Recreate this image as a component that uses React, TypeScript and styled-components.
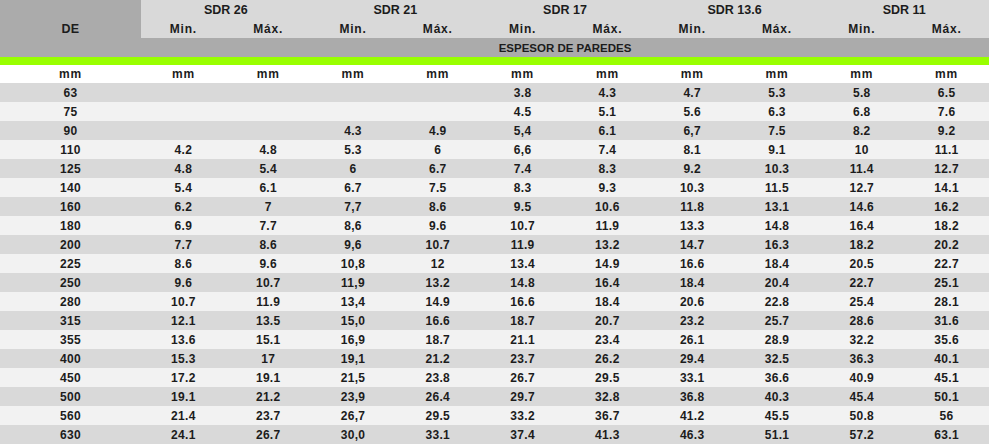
import React from "react";
import styled, { createGlobalStyle } from "styled-components";

const GlobalStyle = createGlobalStyle`
  body {
    margin: 0;
    background: #ffffff;
    font-family: "Liberation Sans", Arial, sans-serif;
  }
`;

const Table = styled.table`
  width: 989px;
  border-collapse: collapse;
  table-layout: fixed;
  font-size: 12px;
  font-weight: bold;
  color: #1c1c1c;
  letter-spacing: 0.3px;
`;

const DeHead = styled.th`
  background: #ababab;
  text-align: center;
  vertical-align: middle;
  padding: 0;
  font-size: 12.5px;
`;

const GroupHead = styled.th`
  background: #d9d9d9;
  height: 19px;
  padding: 0;
  text-align: center;
  font-size: 12.5px;
  letter-spacing: 0;
`;

const SubHead = styled.th`
  background: #d9d9d9;
  height: 19px;
  padding: 0;
  text-align: center;
  letter-spacing: 0.8px;
`;

const BandHead = styled.th`
  background: #ababab;
  height: 19px;
  padding: 0;
  text-align: center;
  font-size: 11.5px;
  letter-spacing: 0;
`;

const GreenRow = styled.tr`
  height: 8px;
  background: #99ff00;
`;

const UnitCell = styled.td`
  height: 18px;
  padding: 0;
  text-align: center;
  background: #ffffff;
  letter-spacing: 0.8px;
`;

const Row = styled.tr<{ $dark: boolean }>`
  background: ${({ $dark }) => ($dark ? "#d9d9d9" : "#f2f2f2")};
`;

const Cell = styled.td`
  height: 19px;
  padding: 0;
  text-align: center;
  vertical-align: middle;
`;

const groups = ["SDR 26", "SDR 21", "SDR 17", "SDR 13.6", "SDR 11"];

const rows: string[][] = [
  ["63", "", "", "", "", "3.8", "4.3", "4.7", "5.3", "5.8", "6.5"],
  ["75", "", "", "", "", "4.5", "5.1", "5.6", "6.3", "6.8", "7.6"],
  ["90", "", "", "4.3", "4.9", "5,4", "6.1", "6,7", "7.5", "8.2", "9.2"],
  ["110", "4.2", "4.8", "5.3", "6", "6,6", "7.4", "8.1", "9.1", "10", "11.1"],
  ["125", "4.8", "5.4", "6", "6.7", "7.4", "8.3", "9.2", "10.3", "11.4", "12.7"],
  ["140", "5.4", "6.1", "6.7", "7.5", "8.3", "9.3", "10.3", "11.5", "12.7", "14.1"],
  ["160", "6.2", "7", "7,7", "8.6", "9.5", "10.6", "11.8", "13.1", "14.6", "16.2"],
  ["180", "6.9", "7.7", "8,6", "9.6", "10.7", "11.9", "13.3", "14.8", "16.4", "18.2"],
  ["200", "7.7", "8.6", "9,6", "10.7", "11.9", "13.2", "14.7", "16.3", "18.2", "20.2"],
  ["225", "8.6", "9.6", "10,8", "12", "13.4", "14.9", "16.6", "18.4", "20.5", "22.7"],
  ["250", "9.6", "10.7", "11,9", "13.2", "14.8", "16.4", "18.4", "20.4", "22.7", "25.1"],
  ["280", "10.7", "11.9", "13,4", "14.9", "16.6", "18.4", "20.6", "22.8", "25.4", "28.1"],
  ["315", "12.1", "13.5", "15,0", "16.6", "18.7", "20.7", "23.2", "25.7", "28.6", "31.6"],
  ["355", "13.6", "15.1", "16,9", "18.7", "21.1", "23.4", "26.1", "28.9", "32.2", "35.6"],
  ["400", "15.3", "17", "19,1", "21.2", "23.7", "26.2", "29.4", "32.5", "36.3", "40.1"],
  ["450", "17.2", "19.1", "21,5", "23.8", "26.7", "29.5", "33.1", "36.6", "40.9", "45.1"],
  ["500", "19.1", "21.2", "23,9", "26.4", "29.7", "32.8", "36.8", "40.3", "45.4", "50.1"],
  ["560", "21.4", "23.7", "26,7", "29.5", "33.2", "36.7", "41.2", "45.5", "50.8", "56"],
  ["630", "24.1", "26.7", "30,0", "33.1", "37.4", "41.3", "46.3", "51.1", "57.2", "63.1"],
];

const App = () => {
  return (
    <>
      <GlobalStyle />
      <Table>
        <colgroup>
          <col style={{ width: 141 }} />
          {Array.from({ length: 10 }).map((_, i) => (
            <col key={i} />
          ))}
        </colgroup>
        <thead>
          <tr>
            <DeHead rowSpan={3}>DE</DeHead>
            {groups.map((g) => (
              <GroupHead key={g} colSpan={2}>
                {g}
              </GroupHead>
            ))}
          </tr>
          <tr>
            {groups.map((g) => (
              <React.Fragment key={g}>
                <SubHead>Min.</SubHead>
                <SubHead>Máx.</SubHead>
              </React.Fragment>
            ))}
          </tr>
          <tr>
            <BandHead colSpan={10}>ESPESOR DE PAREDES</BandHead>
          </tr>
          <GreenRow>
            <td colSpan={11} />
          </GreenRow>
        </thead>
        <tbody>
          <tr>
            {Array.from({ length: 11 }).map((_, i) => (
              <UnitCell key={i}>mm</UnitCell>
            ))}
          </tr>
          {rows.map((r, i) => (
            <Row key={r[0]} $dark={i % 2 === 0}>
              {r.map((v, j) => (
                <Cell key={j}>{v}</Cell>
              ))}
            </Row>
          ))}
        </tbody>
      </Table>
    </>
  );
};

export default App;
